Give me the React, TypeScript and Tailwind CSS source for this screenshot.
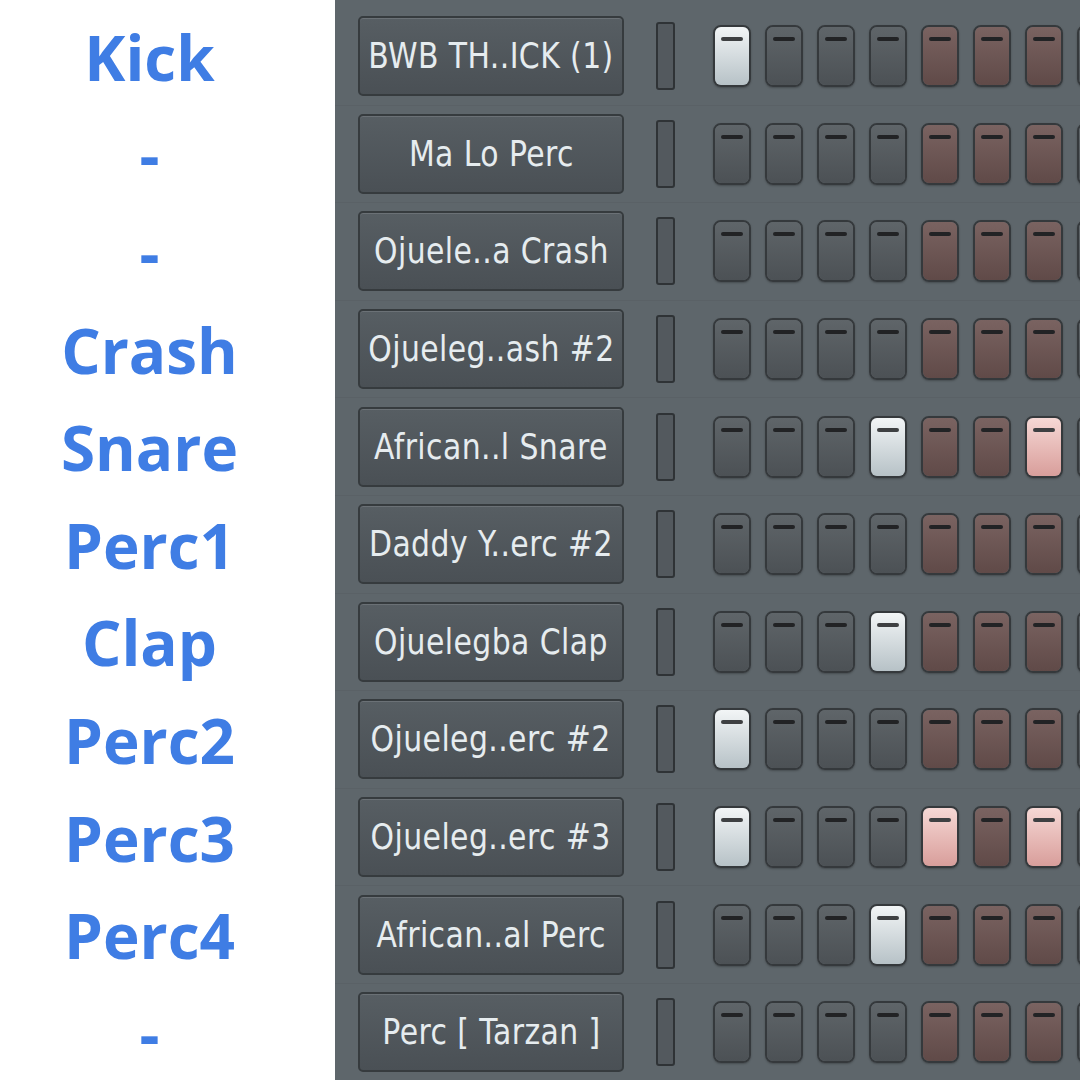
import React from 'react'

const labels = ['Kick', '-', '-', 'Crash', 'Snare', 'Perc1', 'Clap', 'Perc2', 'Perc3', 'Perc4', '-']

const channels = [
    { name: 'BWB TH..ICK (1)', on: [0] },
    { name: 'Ma Lo Perc', on: [] },
    { name: 'Ojuele..a Crash', on: [] },
    { name: 'Ojueleg..ash #2', on: [] },
    { name: 'African..l Snare', on: [3, 6] },
    { name: 'Daddy Y..erc #2', on: [] },
    { name: 'Ojuelegba Clap', on: [3] },
    { name: 'Ojueleg..erc #2', on: [0] },
    { name: 'Ojueleg..erc #3', on: [0, 4, 6] },
    { name: 'African..al Perc', on: [3] },
    { name: 'Perc [ Tarzan ]', on: [] },
]

function StepButton({ index, on }: { index: number; on: boolean }) {
    const red = index >= 4 && index <= 6
    let body = 'bg-gradient-to-b from-[#5f6569] to-[#4c5155]'
    if (red) body = 'bg-gradient-to-b from-[#7a6361] to-[#604a48]'
    if (on && !red) body = 'bg-gradient-to-b from-[#f2f5f6] to-[#b7c2c7]'
    if (on && red) body = 'bg-gradient-to-b from-[#f6d8d5] to-[#d89e9b]'
    return (
        <div className="w-[38px] h-[62px] shrink-0 rounded-[8px] border-2 border-[#35393c] shadow-[0_1px_2px_rgba(0,0,0,0.25)] overflow-hidden">
            <div className={`w-full h-full flex justify-center pt-[10px] ${body}`}>
                <div className={`w-[22px] h-[4px] rounded-[2px] ${on ? 'bg-[#3e4042]' : 'bg-[#222325]'}`} />
            </div>
        </div>
    )
}

function ChannelRow({ name, on }: { name: string; on: number[] }) {
    return (
        <div className="h-[97.6px] flex items-center border-b border-[#5a6166]">
            <div className="ml-[23px] w-[266px] h-[80px] shrink-0 rounded-[5px] border-2 border-[#363b3e] bg-gradient-to-b from-[#575e63] to-[#4a5055] shadow-[inset_0_1px_0_rgba(255,255,255,0.12)] flex items-center justify-center">
                <span
                    className="text-[#e6ecef] text-[36px] whitespace-nowrap scale-x-[0.83] inline-block tracking-[0.5px]"
                    style={{ fontFamily: '"DejaVu Sans", sans-serif' }}
                >
                    {name}
                </span>
            </div>
            <div className="ml-[32px] w-[19px] h-[68px] shrink-0 rounded-[3px] border-2 border-[#2f3336] bg-[#53595e]" />
            <div className="ml-[38px] flex gap-[14px]">
                {[0, 1, 2, 3, 4, 5, 6, 7].map((i) => (
                    <StepButton key={i} index={i} on={on.includes(i)} />
                ))}
            </div>
        </div>
    )
}

export default function App() {
    return (
        <div className="w-[1080px] h-[1080px] flex overflow-hidden bg-white">
            {/* labels */}
            <div className="w-[335px] shrink-0 bg-white pt-[8px] pr-[36px]">
                {labels.map((l, i) => (
                    <div
                        key={i}
                        className="h-[97.6px] flex items-center justify-center text-[#3f7de4] font-bold text-[62px] leading-none"
                        style={{ fontFamily: '"Open Sans", "Noto Sans", sans-serif' }}
                    >
                        {l}
                    </div>
                ))}
            </div>
            {/* channel rack */}
            <div className="flex-1 bg-[#5e666b] pt-[8px] overflow-hidden">
                {channels.map((c, i) => (
                    <ChannelRow key={i} name={c.name} on={c.on} />
                ))}
            </div>
        </div>
    )
}
